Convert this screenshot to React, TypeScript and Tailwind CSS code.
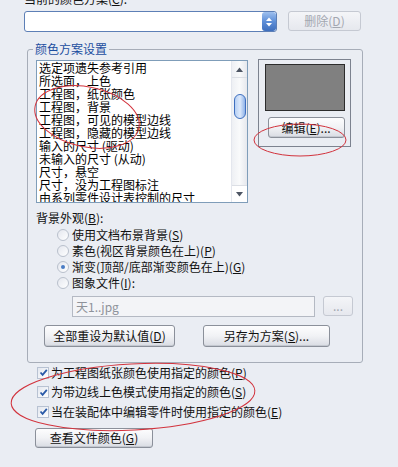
import React from "react";

const F = { fontFamily: '"Noto Sans CJK SC", "Noto Sans", sans-serif' };

function Btn({ children, className = "", disabled = false }: { children: React.ReactNode; className?: string; disabled?: boolean }) {
  return (
    <div
      className={
        "flex items-center justify-center rounded-[3px] border text-[12px] leading-[12px] " +
        (disabled
          ? "border-[#c5c9d2] bg-gradient-to-b from-[#f4f5f8] to-[#e6e8ee] text-[#a3a7b0] "
          : "border-[#8b909a] bg-gradient-to-b from-[#fdfdfe] via-[#f1f2f5] to-[#d9dce3] text-[#111] shadow-[inset_0_-1px_0_#c4c8d0] ") +
        className
      }
    >
      {children}
    </div>
  );
}

function Radio({ checked = false }: { checked?: boolean }) {
  return (
    <div className="flex h-[12px] w-[12px] items-center justify-center rounded-full border border-[#b9c0cc] bg-gradient-to-br from-[#e4e7ee] to-[#ffffff]">
      {checked && <div className="h-[4px] w-[4px] rounded-full bg-[#4a7cc4]" />}
    </div>
  );
}

function Check() {
  return (
    <div className="flex h-[12px] w-[12px] items-center justify-center border border-[#b8c2d2] bg-gradient-to-br from-[#e3e7ef] to-[#ffffff]">
      <svg width="9" height="9" viewBox="0 0 9 9">
        <path d="M1.5 4.5 L3.6 6.8 L7.8 1.8" fill="none" stroke="#2a5aa8" strokeWidth="1.8" />
      </svg>
    </div>
  );
}

const items = [
  "选定项遗失参考引用",
  "所选面，上色",
  "工程图，纸张颜色",
  "工程图，背景",
  "工程图，可见的模型边线",
  "工程图，隐藏的模型边线",
  "输入的尺寸 (驱动)",
  "未输入的尺寸 (从动)",
  "尺寸，悬空",
  "尺寸，没为工程图标注",
  "由系列零件设计表控制的尺寸",
];

export default function App() {
  return (
    <div className="relative h-[467px] w-[398px] overflow-hidden bg-[#eaedf3] text-[12px] text-[#111]" style={F}>
      <div className="-mt-[7px] h-[12px] pl-[24px] leading-[12px]">当前的颜色方案(<u>C</u>):</div>

      <div className="mt-[6px] flex items-start pl-[24px]">
        <div className="flex h-[21px] w-[253px] items-stretch overflow-hidden rounded-[3px] border border-[#5d7fb6] bg-white">
          <div className="flex-1" />
          <div className="flex w-[14px] flex-col items-center justify-center gap-[2px] rounded-[3px] bg-gradient-to-b from-[#9fc0ee] via-[#5e8fd8] to-[#3f6fbd]">
            <svg width="8" height="12" viewBox="0 0 8 12">
              <path d="M1 5 L4 1.5 L7 5 Z" fill="#fff" />
              <path d="M1 7 L4 10.5 L7 7 Z" fill="#fff" />
            </svg>
          </div>
        </div>
        <Btn disabled className="ml-[11px] h-[20px] w-[73px]">
          删除(<u>D</u>)
        </Btn>
      </div>

      <div className="relative ml-[27px] mt-[17px] h-[314px] w-[336px] rounded-[3px] border border-[#a7adb8] pl-[8px] pt-[10px]">
        <span className="absolute -top-[8px] left-[5px] bg-[#eaedf3] px-[2px] leading-[14px] text-[#1b4ea0]">颜色方案设置</span>

        <div className="flex items-start">
          <div className="flex h-[143px] w-[212px] border border-[#7f9db9] bg-white">
            <div className="flex-1 overflow-hidden pl-[2px] pt-[0px] leading-[13px] text-black">
              {items.map((t) => (
                <div key={t} className="h-[13px] whitespace-nowrap">
                  {t}
                </div>
              ))}
            </div>
            <div className="flex w-[16px] flex-col border-l border-[#e4e7ee] bg-gradient-to-r from-[#eef0f4] via-[#f9fafb] to-[#e6e8ed]">
              <div className="flex h-[17px] items-center justify-center border-b border-[#dcdfe5]">
                <svg width="7" height="5" viewBox="0 0 7 5">
                  <path d="M0 5 L3.5 0.5 L7 5 Z" fill="#4d5563" />
                </svg>
              </div>
              <div className="mt-[16px] flex justify-center">
                <div className="h-[25px] w-[12px] rounded-[6px] border border-[#3f6fbf] bg-gradient-to-r from-[#b7d0f4] via-[#dde9fb] to-[#90b3e8]" />
              </div>
              <div className="flex-1" />
              <div className="flex h-[17px] items-center justify-center border-t border-[#dcdfe5] bg-white">
                <svg width="7" height="5" viewBox="0 0 7 5">
                  <path d="M0 0 L3.5 4.5 L7 0 Z" fill="#4d5563" />
                </svg>
              </div>
            </div>
          </div>

          <div className="-mt-[1px] ml-[10px] flex h-[88px] w-[93px] flex-col items-center border border-[#7c828f] pt-[4px]">
            <div className="h-[47px] w-[80px] border border-[#2c2c2c] bg-[#808080]" />
            <Btn className="ml-[3px] mt-[6px] h-[21px] w-[77px]">
              编辑(<u>E</u>)...
            </Btn>
          </div>
        </div>

        <div className="mt-[8px] h-[14px] leading-[14px]">背景外观(<u>B</u>):</div>

        <div className="mt-[2px] flex flex-col pl-[21px]">
          {[
            ["使用文档布景背景(", "S", ")", false],
            ["素色(视区背景颜色在上)(", "P", ")", false],
            ["渐变(顶部/底部渐变颜色在上)(", "G", ")", true],
            ["图象文件(", "I", "):", false],
          ].map(([a, k, b, c]) => (
            <div key={a as string} className="flex h-[16px] items-center gap-[3px] leading-[14px]">
              <Radio checked={c as boolean} />
              <span>
                {a as string}
                <u>{k as string}</u>
                {b as string}
              </span>
            </div>
          ))}
        </div>

        <div className="mt-[5px] flex items-start pl-[36px]">
          <div className="flex h-[21px] w-[243px] items-center border border-[#b4b9c3] bg-[#f3f4f7] pl-[3px] leading-[14px] text-[#8e929a]">
            天1..jpg
          </div>
          <Btn disabled className="ml-[8px] h-[20px] w-[30px]">
            ...
          </Btn>
        </div>

        <div className="mt-[8px] flex pl-[8px]">
          <Btn className="h-[22px] w-[131px]">
            全部重设为默认值(<u>D</u>)
          </Btn>
          <Btn className="ml-[28px] h-[22px] w-[127px]">
            另存为方案(<u>S</u>)...
          </Btn>
        </div>
      </div>

      <div className="flex flex-col pl-[37px]">
        {[
          ["为工程图纸张颜色使用指定的颜色(", "P", ")"],
          ["为带边线上色模式使用指定的颜色(", "S", ")"],
          ["当在装配体中编辑零件时使用指定的颜色(", "E", ")"],
        ].map(([a, k, b]) => (
          <div key={a} className="flex h-[19.5px] items-center gap-[2px] leading-[14px]">
            <Check />
            <span>
              {a}
              <u>{k}</u>
              {b}
            </span>
          </div>
        ))}
      </div>

      <Btn className="ml-[35px] mt-[6px] h-[20px] w-[118px]">
        查看文件颜色(<u>G</u>)
      </Btn>

      <svg className="pointer-events-none absolute left-0 top-0" width="398" height="467" viewBox="0 0 398 467">
        <ellipse cx="87" cy="117" rx="53" ry="30" transform="rotate(12 87 117)" fill="none" stroke="#d2333d" strokeWidth="1" />
        <ellipse cx="300" cy="140" rx="46" ry="16" fill="none" stroke="#d2333d" strokeWidth="1" />
        <ellipse cx="133" cy="397" rx="122" ry="33" transform="rotate(-3 133 397)" fill="none" stroke="#d2333d" strokeWidth="1" />
      </svg>
    </div>
  );
}
